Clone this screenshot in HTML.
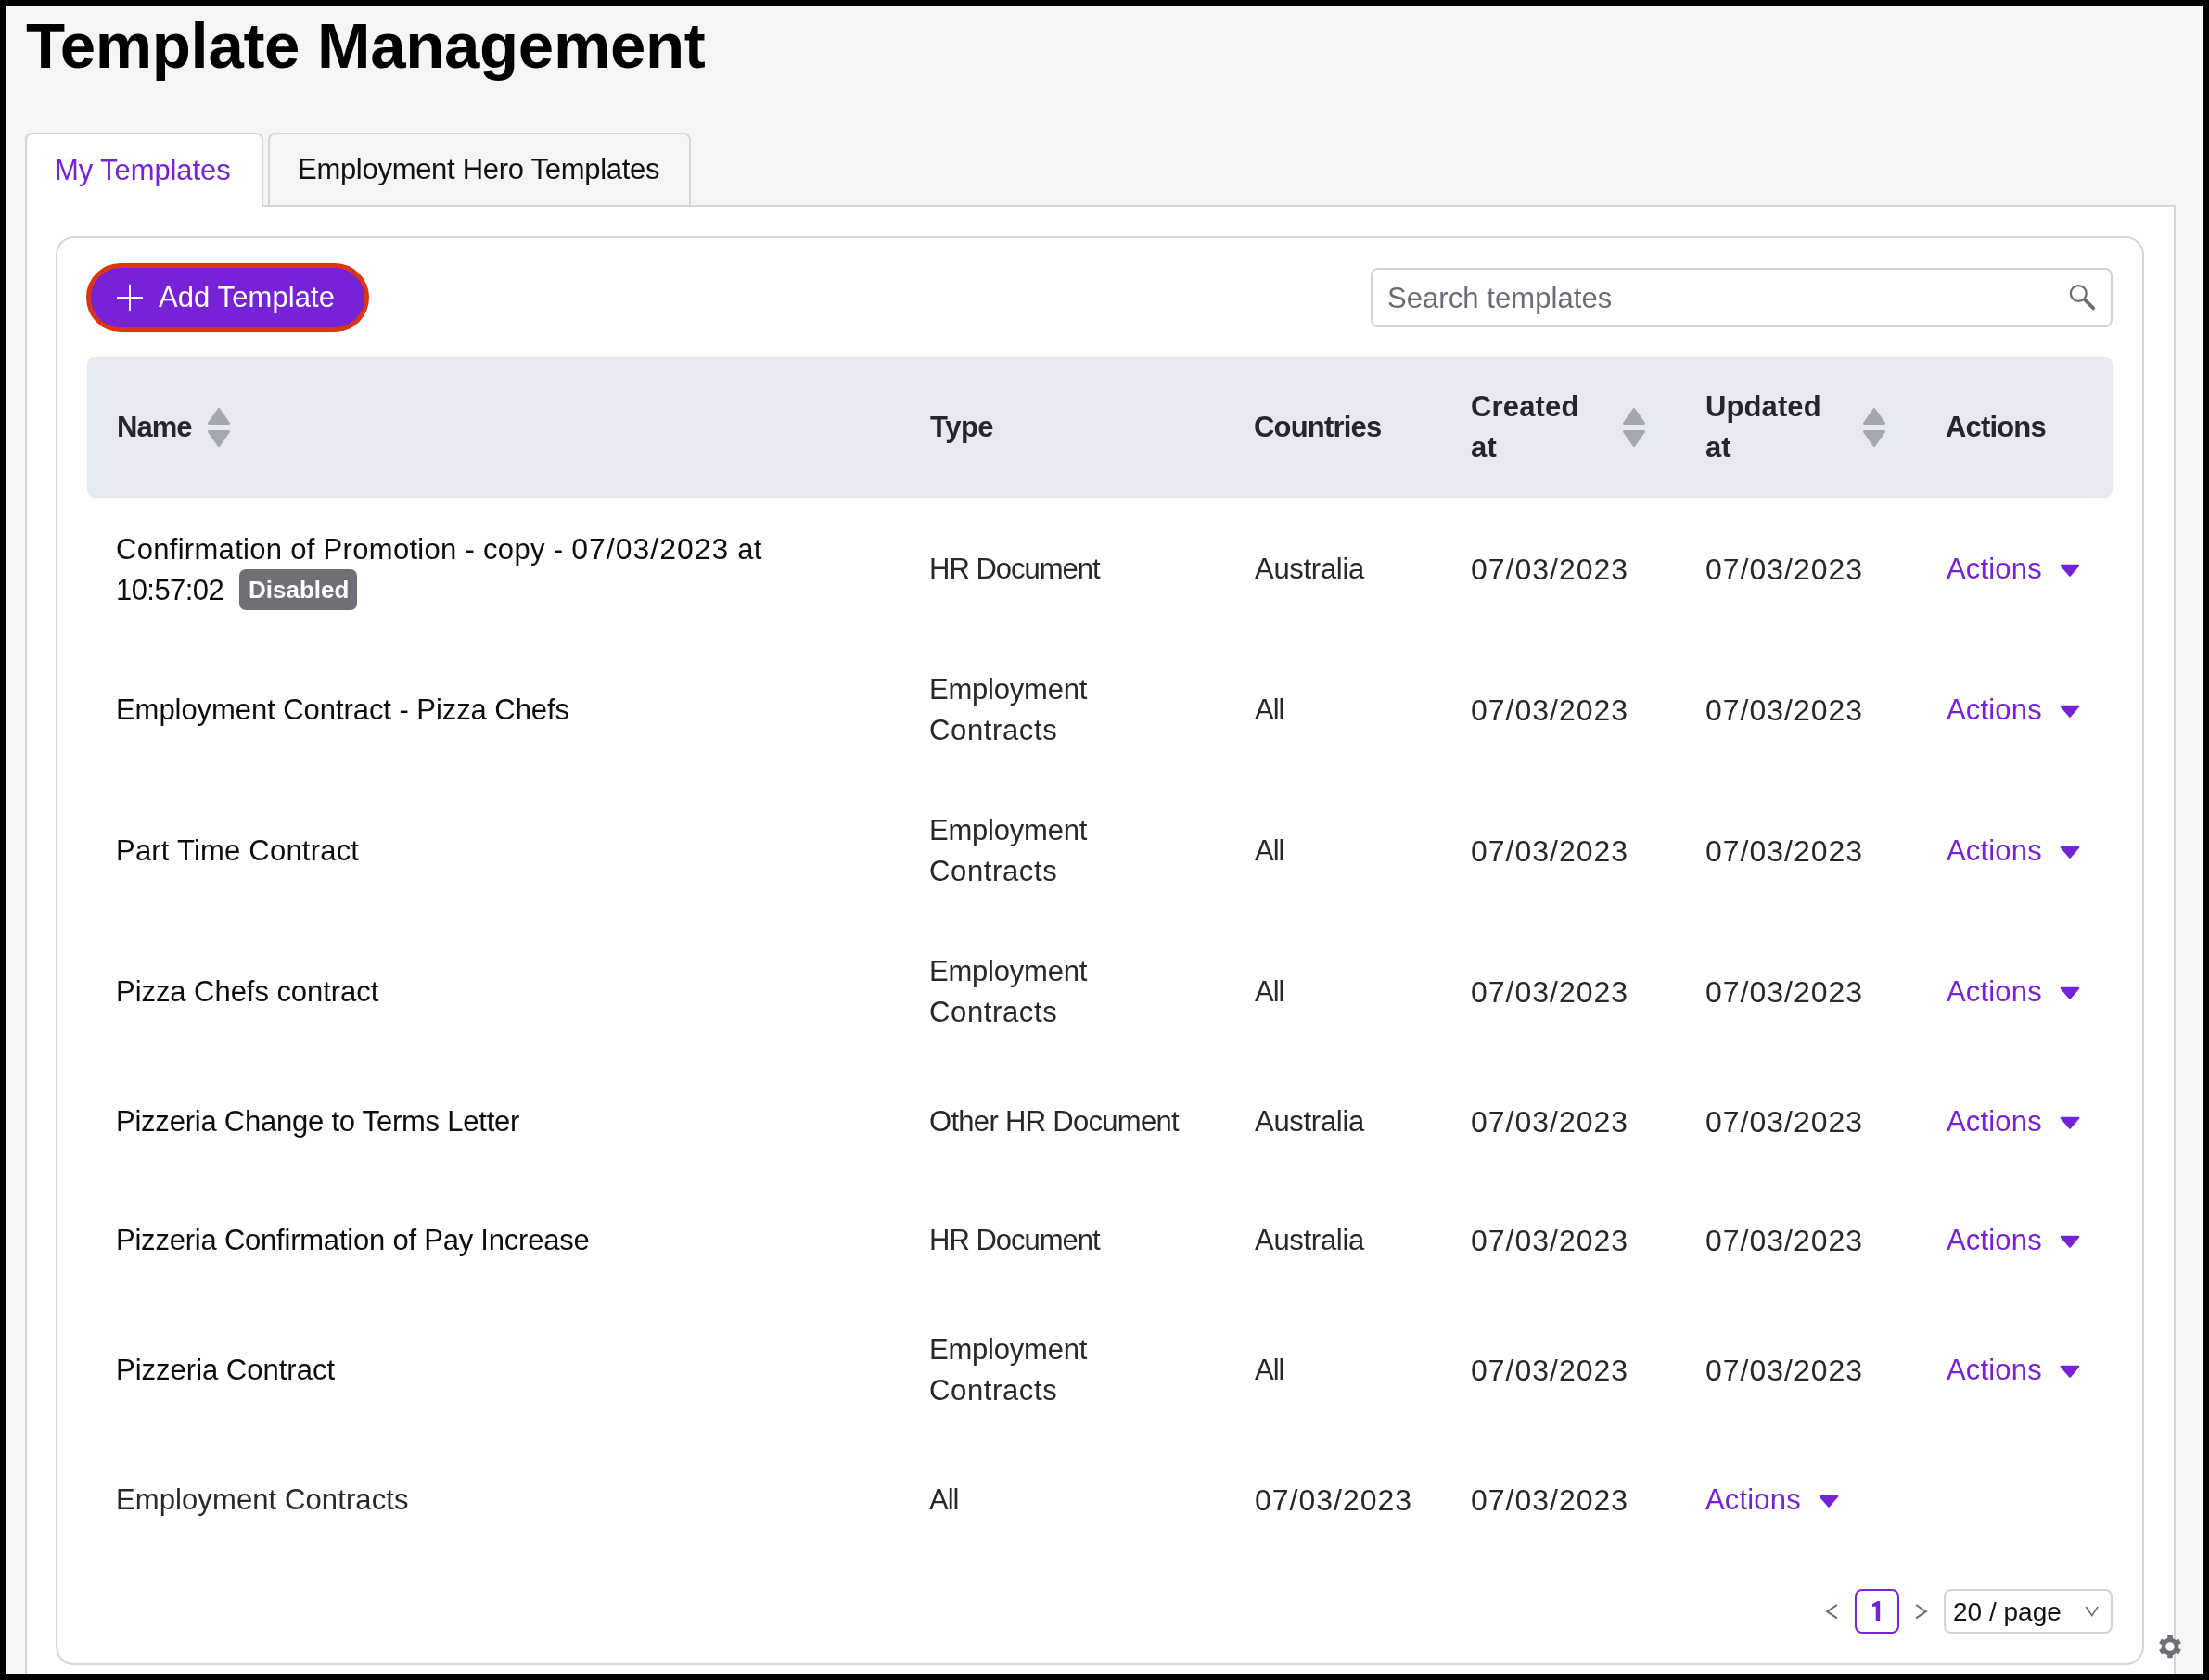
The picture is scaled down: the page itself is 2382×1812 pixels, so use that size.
<!DOCTYPE html>
<html><head><meta charset="utf-8"><title>Template Management</title>
<style>
html,body{margin:0;padding:0}
body{width:2382px;height:1812px;background:#000;position:relative;overflow:hidden;font-family:"Liberation Sans",sans-serif}
.a{position:absolute}
.t{position:absolute;will-change:transform;white-space:nowrap;font-size:31px;line-height:44px}
.b{font-weight:700}
.h{color:#25262b;font-weight:700}
.nm{color:#0d0d0d}
.cl{color:#27282c}
.pu{color:#7622d7}
.dt{letter-spacing:1px;font-size:32px}
.ed{position:absolute;background:#000}
</style></head><body>
<div class="a" style="left:6px;top:6px;width:2370px;height:1800px;background:#f5f5f5"></div>

<div class="t b" style="left:28px;top:10.1px;font-size:69px;line-height:80px;letter-spacing:-0.33px;color:#000">Template Management</div>
<div class="a" style="left:27px;top:221px;width:2319px;height:1700px;box-sizing:border-box;border:2px solid #d5d6dc;background:#fff"></div>
<div class="a" style="left:27px;top:143px;width:257px;height:80px;box-sizing:border-box;border:2px solid #d5d6dc;border-bottom:none;border-radius:8px 8px 0 0;background:#fff"></div>
<div class="t pu" style="left:59px;top:162.3px;letter-spacing:-0.09px">My Templates</div>
<div class="a" style="left:289px;top:143px;width:456px;height:78px;box-sizing:border-box;border:2px solid #d5d6dc;border-bottom:none;border-radius:8px 8px 0 0;background:#f5f5f5"></div>
<div class="t" style="left:321px;top:161.3px;letter-spacing:-0.29px;color:#111">Employment Hero Templates</div>
<div class="a" style="left:60px;top:255px;width:2252px;height:1541px;box-sizing:border-box;border:2px solid #d5d6dc;border-radius:20px;background:#fff"></div>
<div class="a" style="left:93px;top:284px;width:305px;height:74px;box-sizing:border-box;border:5px solid #dc3511;border-radius:37px;background:#7622d7"></div>
<div class="a" style="left:126px;top:320px;width:28px;height:2px;background:#fff"></div>
<div class="a" style="left:139px;top:307px;width:2px;height:28px;background:#fff"></div>
<div class="t" style="left:171px;top:299.3px;letter-spacing:0.09px;color:#fff">Add Template</div>
<div class="a" style="left:1478px;top:289px;width:800px;height:64px;box-sizing:border-box;border:2px solid #d2d3d8;border-radius:8px;background:#fff"></div>
<div class="t" style="left:1496px;top:300.3px;letter-spacing:0.07px;color:#6c6d74">Search templates</div>
<svg class="a" style="left:2229px;top:305px" width="32" height="32" viewBox="0 0 32 32"><circle cx="12.3" cy="11.5" r="8.4" fill="none" stroke="#6c6d74" stroke-width="2.3"/><line x1="19.6" y1="18.8" x2="28.3" y2="27.3" stroke="#6c6d74" stroke-width="3.8" stroke-linecap="round"/></svg>
<div class="a" style="left:94px;top:385px;width:2184px;height:152px;border-radius:8px;background:#e6e9f0"></div>
<div class="t h" style="left:126px;top:439.3px;letter-spacing:-1px">Name</div>
<svg class="a" style="left:224px;top:440px" width="24" height="42" viewBox="0 0 24 42"><path d="M12 1.5 L22.5 16.5 L1.5 16.5 Z" fill="#a6a7ad" stroke="#a6a7ad" stroke-width="3" stroke-linejoin="round"/><path d="M1.5 25.5 L22.5 25.5 L12 40.5 Z" fill="#a6a7ad" stroke="#a6a7ad" stroke-width="3" stroke-linejoin="round"/></svg>
<div class="t h" style="left:1003px;top:439.3px;letter-spacing:-0.5px">Type</div>
<div class="t h" style="left:1352px;top:439.3px;letter-spacing:-0.81px">Countries</div>
<div class="t h" style="left:1586px;top:417.3px;letter-spacing:0.17px">Created<br>at</div>
<svg class="a" style="left:1750px;top:440px" width="24" height="42" viewBox="0 0 24 42"><path d="M12 1.5 L22.5 16.5 L1.5 16.5 Z" fill="#a6a7ad" stroke="#a6a7ad" stroke-width="3" stroke-linejoin="round"/><path d="M1.5 25.5 L22.5 25.5 L12 40.5 Z" fill="#a6a7ad" stroke="#a6a7ad" stroke-width="3" stroke-linejoin="round"/></svg>
<div class="t h" style="left:1839px;top:417.3px;letter-spacing:0.1px">Updated<br>at</div>
<svg class="a" style="left:2009px;top:440px" width="24" height="42" viewBox="0 0 24 42"><path d="M12 1.5 L22.5 16.5 L1.5 16.5 Z" fill="#a6a7ad" stroke="#a6a7ad" stroke-width="3" stroke-linejoin="round"/><path d="M1.5 25.5 L22.5 25.5 L12 40.5 Z" fill="#a6a7ad" stroke="#a6a7ad" stroke-width="3" stroke-linejoin="round"/></svg>
<div class="t h" style="left:2098px;top:439.3px;letter-spacing:-0.83px">Actions</div>
<div class="t nm" style="left:125px;top:570.0px;letter-spacing:0.3px">Confirmation of Promotion - copy - <span class="dt">07/03/2023</span> at<br><span style="letter-spacing:-0.57px">10:57:02</span></div>
<div class="a" style="left:258px;top:614px;width:127px;height:44px;border-radius:7px;background:#6f7075"></div>
<div class="t b" style="left:268px;top:614.0px;font-size:26px;color:#fff">Disabled</div>
<div class="t cl" style="left:1002px;top:592.0px;"><span style="letter-spacing:-1.00px">HR Document</span></div>
<div class="t cl" style="left:1353px;top:592.0px;"><span style="letter-spacing:-0.29px">Australia</span></div>
<div class="t cl dt" style="left:1586px;top:592.0px;">07/03/2023</div>
<div class="t cl dt" style="left:1839px;top:592.0px;">07/03/2023</div>
<div class="t pu" style="left:2099px;top:592.0px;letter-spacing:0.17px">Actions</div><svg class="a" style="left:2221px;top:607.7px" width="22" height="14" viewBox="0 0 22 14"><path d="M2 2 L20 2 L11 12.5 Z" fill="#7622d7" stroke="#7622d7" stroke-width="2.5" stroke-linejoin="round"/></svg>
<div class="t nm" style="left:125px;top:744.0px;"><span style="letter-spacing:-0.06px">Employment Contract - Pizza Chefs</span></div>
<div class="t cl" style="left:1002px;top:722.0px;"><span style="letter-spacing:-0.22px">Employment</span><br><span style="letter-spacing:0.63px">Contracts</span></div>
<div class="t cl" style="left:1353px;top:744.0px;"><span style="letter-spacing:-1.00px">All</span></div>
<div class="t cl dt" style="left:1586px;top:744.0px;">07/03/2023</div>
<div class="t cl dt" style="left:1839px;top:744.0px;">07/03/2023</div>
<div class="t pu" style="left:2099px;top:744.0px;letter-spacing:0.17px">Actions</div><svg class="a" style="left:2221px;top:759.7px" width="22" height="14" viewBox="0 0 22 14"><path d="M2 2 L20 2 L11 12.5 Z" fill="#7622d7" stroke="#7622d7" stroke-width="2.5" stroke-linejoin="round"/></svg>
<div class="t nm" style="left:125px;top:896.0px;"><span style="letter-spacing:0.21px">Part Time Contract</span></div>
<div class="t cl" style="left:1002px;top:874.0px;"><span style="letter-spacing:-0.22px">Employment</span><br><span style="letter-spacing:0.63px">Contracts</span></div>
<div class="t cl" style="left:1353px;top:896.0px;"><span style="letter-spacing:-1.00px">All</span></div>
<div class="t cl dt" style="left:1586px;top:896.0px;">07/03/2023</div>
<div class="t cl dt" style="left:1839px;top:896.0px;">07/03/2023</div>
<div class="t pu" style="left:2099px;top:896.0px;letter-spacing:0.17px">Actions</div><svg class="a" style="left:2221px;top:911.7px" width="22" height="14" viewBox="0 0 22 14"><path d="M2 2 L20 2 L11 12.5 Z" fill="#7622d7" stroke="#7622d7" stroke-width="2.5" stroke-linejoin="round"/></svg>
<div class="t nm" style="left:125px;top:1048.0px;"><span style="letter-spacing:-0.05px">Pizza Chefs contract</span></div>
<div class="t cl" style="left:1002px;top:1026.0px;"><span style="letter-spacing:-0.22px">Employment</span><br><span style="letter-spacing:0.63px">Contracts</span></div>
<div class="t cl" style="left:1353px;top:1048.0px;"><span style="letter-spacing:-1.00px">All</span></div>
<div class="t cl dt" style="left:1586px;top:1048.0px;">07/03/2023</div>
<div class="t cl dt" style="left:1839px;top:1048.0px;">07/03/2023</div>
<div class="t pu" style="left:2099px;top:1048.0px;letter-spacing:0.17px">Actions</div><svg class="a" style="left:2221px;top:1063.7px" width="22" height="14" viewBox="0 0 22 14"><path d="M2 2 L20 2 L11 12.5 Z" fill="#7622d7" stroke="#7622d7" stroke-width="2.5" stroke-linejoin="round"/></svg>
<div class="t nm" style="left:125px;top:1188.0px;"><span style="letter-spacing:-0.23px">Pizzeria Change to Terms Letter</span></div>
<div class="t cl" style="left:1002px;top:1188.0px;"><span style="letter-spacing:-0.70px">Other HR Document</span></div>
<div class="t cl" style="left:1353px;top:1188.0px;"><span style="letter-spacing:-0.29px">Australia</span></div>
<div class="t cl dt" style="left:1586px;top:1188.0px;">07/03/2023</div>
<div class="t cl dt" style="left:1839px;top:1188.0px;">07/03/2023</div>
<div class="t pu" style="left:2099px;top:1188.0px;letter-spacing:0.17px">Actions</div><svg class="a" style="left:2221px;top:1203.7px" width="22" height="14" viewBox="0 0 22 14"><path d="M2 2 L20 2 L11 12.5 Z" fill="#7622d7" stroke="#7622d7" stroke-width="2.5" stroke-linejoin="round"/></svg>
<div class="t nm" style="left:125px;top:1316.0px;"><span style="letter-spacing:-0.22px">Pizzeria Confirmation of Pay Increase</span></div>
<div class="t cl" style="left:1002px;top:1316.0px;"><span style="letter-spacing:-1.00px">HR Document</span></div>
<div class="t cl" style="left:1353px;top:1316.0px;"><span style="letter-spacing:-0.29px">Australia</span></div>
<div class="t cl dt" style="left:1586px;top:1316.0px;">07/03/2023</div>
<div class="t cl dt" style="left:1839px;top:1316.0px;">07/03/2023</div>
<div class="t pu" style="left:2099px;top:1316.0px;letter-spacing:0.17px">Actions</div><svg class="a" style="left:2221px;top:1331.7px" width="22" height="14" viewBox="0 0 22 14"><path d="M2 2 L20 2 L11 12.5 Z" fill="#7622d7" stroke="#7622d7" stroke-width="2.5" stroke-linejoin="round"/></svg>
<div class="t nm" style="left:125px;top:1456.0px;"><span style="letter-spacing:0.00px">Pizzeria Contract</span></div>
<div class="t cl" style="left:1002px;top:1434.0px;"><span style="letter-spacing:-0.22px">Employment</span><br><span style="letter-spacing:0.63px">Contracts</span></div>
<div class="t cl" style="left:1353px;top:1456.0px;"><span style="letter-spacing:-1.00px">All</span></div>
<div class="t cl dt" style="left:1586px;top:1456.0px;">07/03/2023</div>
<div class="t cl dt" style="left:1839px;top:1456.0px;">07/03/2023</div>
<div class="t pu" style="left:2099px;top:1456.0px;letter-spacing:0.17px">Actions</div><svg class="a" style="left:2221px;top:1471.7px" width="22" height="14" viewBox="0 0 22 14"><path d="M2 2 L20 2 L11 12.5 Z" fill="#7622d7" stroke="#7622d7" stroke-width="2.5" stroke-linejoin="round"/></svg>
<div class="t cl" style="left:125px;top:1596.0px;"><span style="letter-spacing:0.10px">Employment Contracts</span></div>
<div class="t cl" style="left:1002px;top:1596.0px;"><span style="letter-spacing:-1.00px">All</span></div>
<div class="t cl dt" style="left:1353px;top:1596.0px;">07/03/2023</div>
<div class="t cl dt" style="left:1586px;top:1596.0px;">07/03/2023</div>
<div class="t pu" style="left:1839px;top:1596.0px;letter-spacing:0.17px">Actions</div><svg class="a" style="left:1961px;top:1611.7px" width="22" height="14" viewBox="0 0 22 14"><path d="M2 2 L20 2 L11 12.5 Z" fill="#7622d7" stroke="#7622d7" stroke-width="2.5" stroke-linejoin="round"/></svg>
<svg class="a" style="left:1968px;top:1729px" width="16" height="20" viewBox="0 0 16 20"><path d="M12.9 2 L2.2 9.2 L12.9 16.4" fill="none" stroke="#6c6d74" stroke-width="2"/></svg>
<div class="a" style="left:2000px;top:1714px;width:48px;height:48px;box-sizing:border-box;border:2px solid #7622d7;border-radius:8px;background:#fff"></div>
<svg class="a" style="left:2010px;top:1720px" width="30" height="35" viewBox="0 0 30 35"><path d="M8.9 10.2 L14.6 6.9 L17.2 6.9 L17.2 28.1 L12.7 28.1 L12.7 12.4 L8.9 12.9 Z" fill="#7622d7"/></svg>
<svg class="a" style="left:2064px;top:1729px" width="16" height="20" viewBox="0 0 16 20"><path d="M2.1 2 L12.8 9.2 L2.1 16.4" fill="none" stroke="#6c6d74" stroke-width="2"/></svg>
<div class="a" style="left:2096px;top:1714px;width:182px;height:48px;box-sizing:border-box;border:2px solid #d2d3d8;border-radius:8px;background:#fff"></div>
<div class="t" style="left:2106px;top:1717.3px;font-size:28px;color:#111">20 / page</div>
<svg class="a" style="left:2247px;top:1731px" width="18" height="14" viewBox="0 0 18 14"><path d="M2.3 2 L8.7 11.6 L15.1 2" fill="none" stroke="#6c6d74" stroke-width="1.6"/></svg>
<svg class="a" style="left:2325.8px;top:1761.8px" width="28" height="28" viewBox="0 0 28 28"><g fill="#6f7076"><rect x="11.2" y="1.8" width="5.6" height="6" rx="0.8" transform="rotate(0 14 14)"/><rect x="11.2" y="1.8" width="5.6" height="6" rx="0.8" transform="rotate(60 14 14)"/><rect x="11.2" y="1.8" width="5.6" height="6" rx="0.8" transform="rotate(120 14 14)"/><rect x="11.2" y="1.8" width="5.6" height="6" rx="0.8" transform="rotate(180 14 14)"/><rect x="11.2" y="1.8" width="5.6" height="6" rx="0.8" transform="rotate(240 14 14)"/><rect x="11.2" y="1.8" width="5.6" height="6" rx="0.8" transform="rotate(300 14 14)"/></g><circle cx="14" cy="14" r="7.1" fill="none" stroke="#6f7076" stroke-width="4.6"/></svg>
<div class="ed" style="left:0;top:0;width:2382px;height:6px"></div>
<div class="ed" style="left:0;top:1806px;width:2382px;height:6px"></div>
<div class="ed" style="left:0;top:0;width:6px;height:1812px"></div>
<div class="ed" style="left:2376px;top:0;width:6px;height:1812px"></div>
</body></html>
